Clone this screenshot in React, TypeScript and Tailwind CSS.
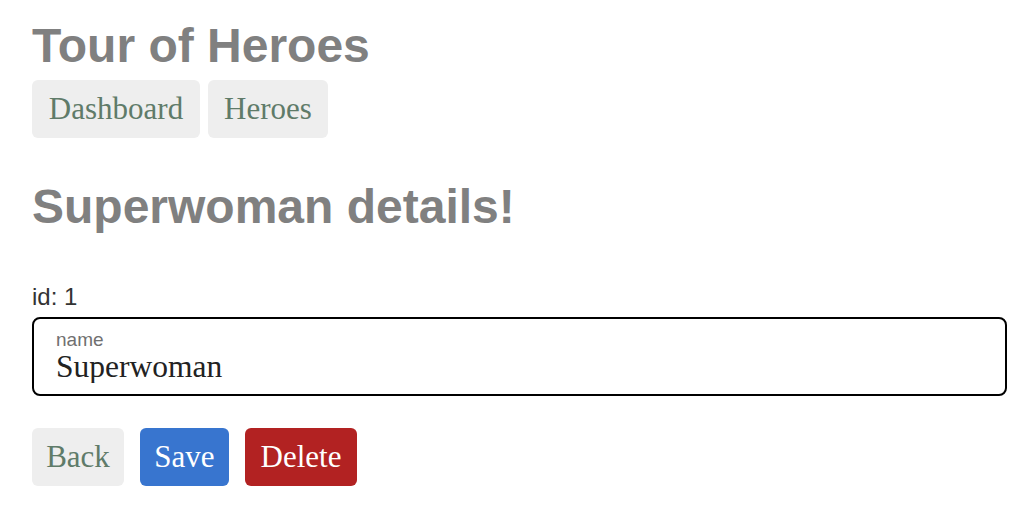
import React from "react";

const serif = "font-['Liberation_Serif',_'Times_New_Roman',_serif]";
const sans = "font-['Liberation_Sans',_Arial,_sans-serif]";

const navBtn = `h-[58px] flex items-center justify-center rounded-md bg-[#eeeeee] text-[#5f7b69] text-[31px] ${serif}`;

export default function App() {
  return (
    <div className={`min-h-[516px] bg-white px-8 pt-[19px] ${sans}`}>
      <h1 className="text-[48px] leading-[54px] font-bold text-[#808080]">Tour of Heroes</h1>
      <nav className="flex gap-2 mt-[7px]">
        <a className={`${navBtn} w-[168px]`}>Dashboard</a>
        <a className={`${navBtn} w-[120px]`}>Heroes</a>
      </nav>

      <h2 className="mt-[42px] text-[48px] leading-[54px] font-bold text-[#808080]">Superwoman details!</h2>
      <div className="mt-[49px] text-[24px] leading-[28px] text-[#333333]">id: 1</div>

      <label className="mt-[6px] flex flex-col w-[975px] h-[79px] rounded-lg border-2 border-black pl-[22px] pt-[10px]">
        <span className="text-[19px] leading-[22px] text-[#707070]">name</span>
        <input
          defaultValue="Superwoman"
          className={`text-[31.5px] leading-[32px] h-[32px] text-[#222222] outline-none bg-transparent ${serif}`}
        />
      </label>

      <div className="flex gap-4 mt-[32px]">
        <button className={`${navBtn} w-[92px]`}>Back</button>
        <button className={`h-[58px] w-[89px] rounded-md bg-[#3875cf] text-white text-[31px] ${serif}`}>Save</button>
        <button className={`h-[58px] w-[112px] rounded-md bg-[#b22222] text-white text-[31px] ${serif}`}>Delete</button>
      </div>
    </div>
  );
}
